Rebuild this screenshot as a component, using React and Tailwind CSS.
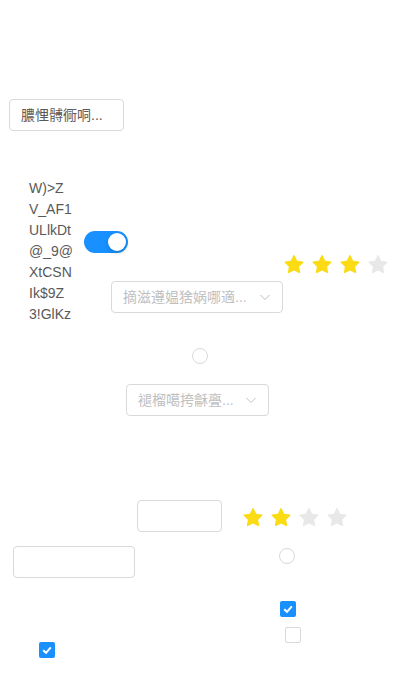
const font = { fontFamily: '"Liberation Sans", "Noto Sans CJK SC", sans-serif' };

const STAR =
  "M908.1 353.1l-253.9-36.9L540.7 86.1c-3.1-6.3-8.2-11.4-14.5-14.5-15.8-7.8-35-1.3-42.9 14.5L369.8 316.2l-253.9 36.9c-7 1-13.4 4.3-18.3 9.3a32.05 32.05 0 00.6 45.3l183.7 179.1-43.4 252.9a31.95 31.95 0 0046.4 33.7L512 754l227.1 119.4c6.2 3.3 13.4 4.4 20.3 3.2 17.4-3 29.1-19.5 26.1-36.9l-43.4-252.9 183.7-179.1c5-4.9 8.3-11.3 9.3-18.3 2.7-17.5-9.5-33.7-27-36.3z";

function Rate({ value, className = "" }) {
  return (
    <div className={"flex gap-2 " + className}>
      {[0, 1, 2, 3].map((i) => (
        <svg key={i} viewBox="64 64 896 896" className="w-5 h-5">
          <path d={STAR} fill={i < value ? "#fadb14" : "#e8e8e8"} />
        </svg>
      ))}
    </div>
  );
}

function Select({ text, className = "" }) {
  return (
    <div
      className={
        "h-8 flex items-center justify-between border border-[#d9d9d9] rounded pl-[11px] pr-[11px] text-sm text-[#bfbfbf] bg-white " +
        className
      }
    >
      <span className="whitespace-nowrap overflow-hidden">{text}</span>
      <svg viewBox="0 0 12 12" className="w-3 h-3 shrink-0">
        <polyline points="1.5,4 6,8.5 10.5,4" fill="none" stroke="#bfbfbf" strokeWidth="1" />
      </svg>
    </div>
  );
}

function Checkbox({ checked, className = "" }) {
  return checked ? (
    <div className={"w-4 h-4 rounded-[2px] bg-[#1890ff] flex items-center justify-center " + className}>
      <svg viewBox="0 0 16 16" className="w-4 h-4">
        <polyline points="4.2,8.2 7,10.8 11.8,5.4" fill="none" stroke="#fff" strokeWidth="2" />
      </svg>
    </div>
  ) : (
    <div className={"w-4 h-4 rounded-[2px] border border-[#d9d9d9] bg-white " + className} />
  );
}

function Radio({ className = "" }) {
  return <div className={"w-4 h-4 rounded-full border border-[#d9d9d9] bg-white " + className} />;
}

function Input({ className = "", children }) {
  return (
    <div
      className={
        "h-8 border border-[#d9d9d9] rounded px-[11px] flex items-center text-sm text-[#595959] bg-white " +
        className
      }
    >
      {children}
    </div>
  );
}

export default function App() {
  const lines = ["W)>Z", "V_AF1", "ULlkDt", "@_9@", "XtCSN", "Ik$9Z", "3!GlKz"];
  return (
    <div className="w-[405px] h-[688px] bg-white overflow-hidden" style={font}>
      <div className="pt-[99px]">
        <Input className="ml-[9px] w-[115px]">膿悝髆衕哃...</Input>
      </div>

      <div className="flex items-start mt-[47px]">
        <div className="ml-[29px] w-[44px] text-sm leading-[21px] text-[#595959]">
          {lines.map((l) => (
            <div key={l}>{l}</div>
          ))}
        </div>
        <div className="flex flex-col items-start">
          <div className="mt-[53px] ml-[11px] w-11 h-[22px] rounded-full bg-[#1890ff] flex items-center justify-end pr-[2px]">
            <div className="w-[18px] h-[18px] rounded-full bg-white shadow-[0_2px_4px_0_rgba(0,35,11,0.2)]" />
          </div>
          <Rate value={3} className="mt-[2px] ml-[211px]" />
          <Select text="摘滋遵媪猞娲哪適..." className="mt-[6px] ml-[38px] w-[172px]" />
        </div>
      </div>

      <Radio className="mt-[23px] ml-[192px]" />
      <Select text="褪榴噶挎龢亹..." className="mt-[20px] ml-[126px] w-[143px]" />

      <div className="flex items-start mt-[84px]">
        <Input className="ml-[137px] w-[85px]" />
        <Rate value={2} className="mt-[8px] ml-[21px]" />
      </div>

      <div className="flex items-start mt-[14px]">
        <Input className="ml-[13px] w-[122px]" />
        <Radio className="mt-[2px] ml-[144px]" />
      </div>

      <Checkbox checked className="mt-[23px] ml-[280px]" />
      <div className="flex items-start mt-[10px]">
        <Checkbox checked className="mt-[15px] ml-[39px]" />
        <Checkbox className="ml-[230px]" />
      </div>
    </div>
  );
}
